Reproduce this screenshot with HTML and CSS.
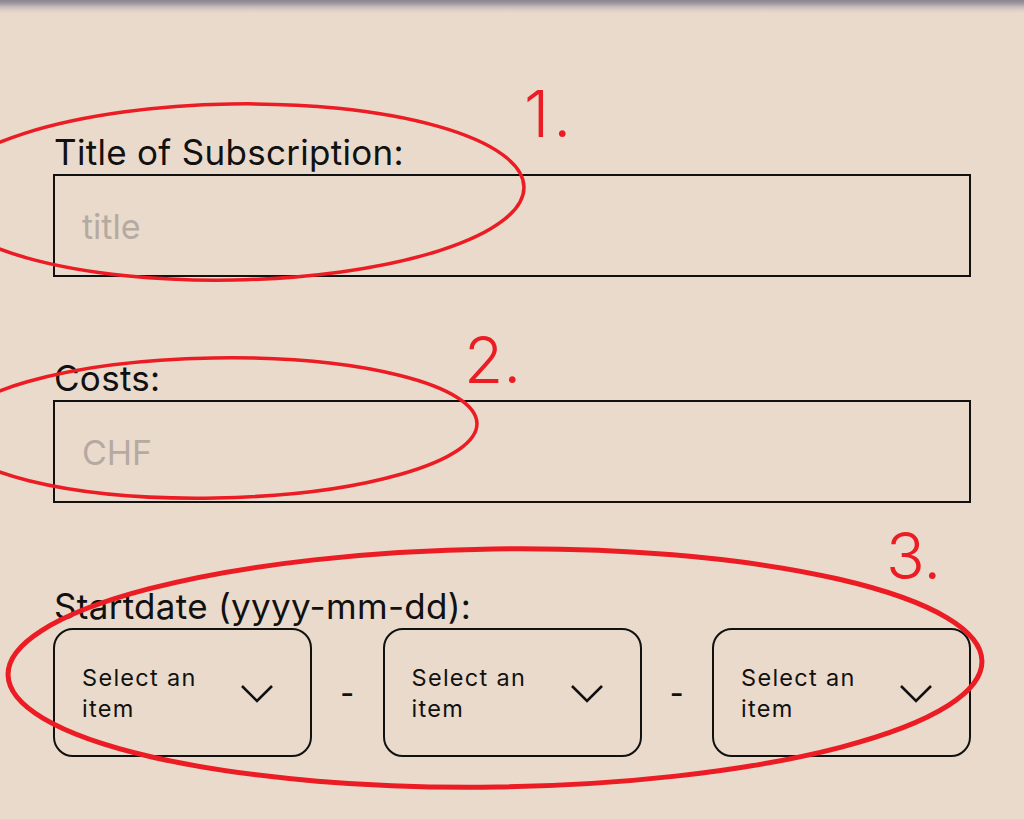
FILE: index.html
```html
<!DOCTYPE html>
<html lang="en">
<head>
<meta charset="utf-8">
<title>Subscription form</title>
<link rel="stylesheet" href="styles.css">
</head>
<body>
<div class="appbar-edge"></div>
<main class="form">
  <section class="field field-title">
    <label class="label">Title of Subscription:</label>
    <div class="input"><span class="placeholder">title</span></div>
  </section>
  <section class="field field-costs">
    <label class="label">Costs:</label>
    <div class="input"><span class="placeholder">CHF</span></div>
  </section>
  <section class="field field-date">
    <label class="label">Startdate (yyyy-mm-dd):</label>
    <div class="date-row">
      <div class="dropdown">
        <span class="dd-text">Select an item</span>
        <svg class="chev" viewBox="0 0 34 20" width="34" height="20"><path d="M2 2 L17 17 L32 2" fill="none" stroke="#111" stroke-width="2.6"/></svg>
      </div>
      <div class="sep">-</div>
      <div class="dropdown">
        <span class="dd-text">Select an item</span>
        <svg class="chev" viewBox="0 0 34 20" width="34" height="20"><path d="M2 2 L17 17 L32 2" fill="none" stroke="#111" stroke-width="2.6"/></svg>
      </div>
      <div class="sep">-</div>
      <div class="dropdown">
        <span class="dd-text">Select an item</span>
        <svg class="chev" viewBox="0 0 34 20" width="34" height="20"><path d="M2 2 L17 17 L32 2" fill="none" stroke="#111" stroke-width="2.6"/></svg>
      </div>
    </div>
  </section>
</main>
<svg class="annotations" viewBox="0 0 1024 819" width="1024" height="819">
  <g fill="none" stroke="#ec1c24">
    <ellipse cx="232" cy="192" rx="292" ry="88" stroke-width="3.5" transform="rotate(-1 232 192)"/>
    <ellipse cx="214" cy="428" rx="263" ry="70" stroke-width="3.5" transform="rotate(-1 214 428)"/>
    <ellipse cx="495" cy="668" rx="487" ry="119" stroke-width="5" transform="rotate(-0.8 495 668)"/>
  </g>
  <g fill="#ec1c24" font-family="Inter, 'Liberation Sans', sans-serif" font-weight="300" font-size="64">
    <text x="524" y="137" letter-spacing="4">1.</text>
    <text x="464" y="383">2.</text>
    <text x="886" y="579">3.</text>
  </g>
</svg>
</body>
</html>
```

FILE: styles.css
```css
html, body {
  margin: 0;
  padding: 0;
}
body {
  background: #eadacb;
  width: 1024px;
  height: 819px;
  overflow: hidden;
  position: relative;
  font-family: Inter, "Liberation Sans", sans-serif;
  color: #111;
}
.appbar-edge {
  height: 14px;
  margin-bottom: -14px;
  background: linear-gradient(to bottom, #8c8491 0px, #9d94a0 3px, #c7bcbb 7px, #e2d3c8 11px, rgba(234, 218, 203, 0) 14px);
}
.form {
  padding: 130px 53px 0 53px;
}
.field {
  display: flex;
  flex-direction: column;
}
.field-costs {
  margin-top: 79px;
}
.field-date {
  margin-top: 81px;
}
.label {
  font-size: 35px;
  line-height: 44px;
  padding-left: 1px;
  letter-spacing: 0.3px;
}
.input {
  height: 99px;
  border: 2px solid #111;
  display: flex;
  align-items: center;
  padding-left: 27px;
}
.placeholder {
  font-size: 34px;
  color: #b5aaa2;
  line-height: 1;
  margin-top: 2px;
}
.date-row {
  display: flex;
  align-items: center;
}
.dropdown {
  box-sizing: border-box;
  width: 259px;
  height: 129px;
  border: 2px solid #111;
  border-radius: 20px;
  display: flex;
  align-items: center;
  justify-content: space-between;
  padding: 0 36px 0 27px;
}
.dd-text {
  font-size: 23.5px;
  line-height: 31px;
  letter-spacing: 1.3px;
  width: 135px;
}
.chev {
  display: block;
  margin-top: 2px;
}
.sep {
  flex: 1;
  text-align: center;
  font-size: 30px;
  font-weight: 500;
  line-height: 1;
}
.annotations {
  position: absolute;
  left: 0;
  top: 0;
  pointer-events: none;
}
```
